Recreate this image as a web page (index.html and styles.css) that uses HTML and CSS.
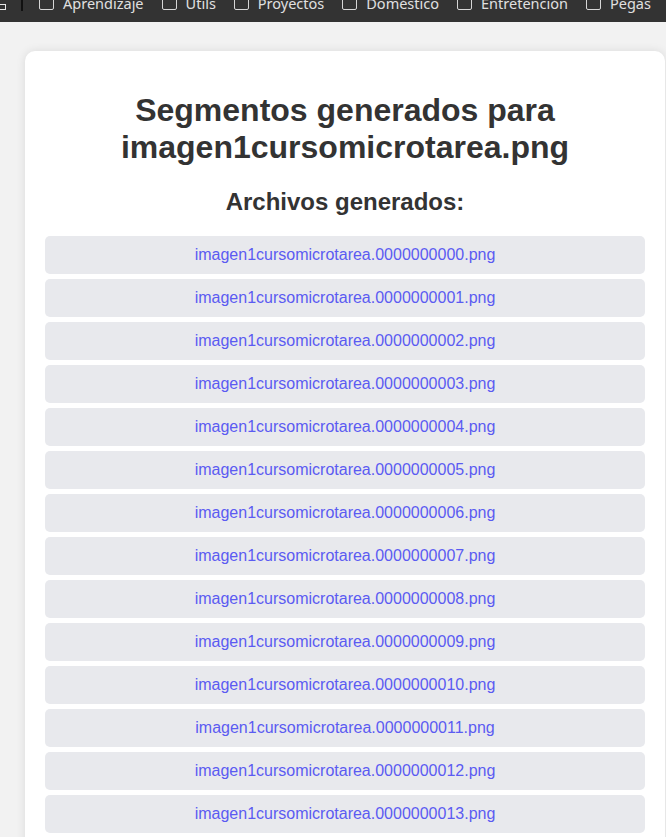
FILE: index.html
```html
<!DOCTYPE html>
<html lang="es">
<head>
<meta charset="utf-8">
<title>Segmentos generados</title>
<link rel="stylesheet" href="styles.css">
</head>
<body>
<div class="bookmarks">
  <div class="bm-row">
    <span class="bm-apps"></span>
    <span class="bm-sep"></span>
    <span class="bm-item"><span class="bm-box"></span>Aprendizaje</span>
    <span class="bm-item"><span class="bm-box"></span>Utils</span>
    <span class="bm-item"><span class="bm-box"></span>Proyectos</span>
    <span class="bm-item"><span class="bm-box"></span>Doméstico</span>
    <span class="bm-item"><span class="bm-box"></span>Entretención</span>
    <span class="bm-item"><span class="bm-box"></span>Pegas</span>
  </div>
</div>
<main class="card">
  <h1>Segmentos generados para imagen1cursomicrotarea.png</h1>
  <h2>Archivos generados:</h2>
  <ul class="files">
    <li><a href="#">imagen1cursomicrotarea.0000000000.png</a></li>
    <li><a href="#">imagen1cursomicrotarea.0000000001.png</a></li>
    <li><a href="#">imagen1cursomicrotarea.0000000002.png</a></li>
    <li><a href="#">imagen1cursomicrotarea.0000000003.png</a></li>
    <li><a href="#">imagen1cursomicrotarea.0000000004.png</a></li>
    <li><a href="#">imagen1cursomicrotarea.0000000005.png</a></li>
    <li><a href="#">imagen1cursomicrotarea.0000000006.png</a></li>
    <li><a href="#">imagen1cursomicrotarea.0000000007.png</a></li>
    <li><a href="#">imagen1cursomicrotarea.0000000008.png</a></li>
    <li><a href="#">imagen1cursomicrotarea.0000000009.png</a></li>
    <li><a href="#">imagen1cursomicrotarea.0000000010.png</a></li>
    <li><a href="#">imagen1cursomicrotarea.0000000011.png</a></li>
    <li><a href="#">imagen1cursomicrotarea.0000000012.png</a></li>
    <li><a href="#">imagen1cursomicrotarea.0000000013.png</a></li>
    <li><a href="#">imagen1cursomicrotarea.0000000014.png</a></li>
  </ul>
</main>
</body>
</html>
```

FILE: styles.css
```css
html, body {
  margin: 0;
  padding: 0;
}
body {
  background: #f2f2f2;
  font-family: "Liberation Sans", Arial, sans-serif;
  color: #333;
  overflow: hidden;
}

.bookmarks {
  height: 22px;
  background: #333333;
  overflow: hidden;
}
.bm-row {
  display: flex;
  align-items: center;
  height: 20px;
  margin-top: -7px;
  font-family: "Noto Sans", "Open Sans", sans-serif;
  font-size: 14.5px;
  line-height: 20px;
  color: #e0e0e0;
  white-space: nowrap;
}
.bm-apps {
  width: 6px;
  height: 6px;
  margin-top: 8px;
  border: 1.5px solid #e8e8e8;
  border-left: none;
  box-sizing: border-box;
  flex: none;
}
.bm-sep {
  width: 2px;
  height: 20px;
  margin-left: 15px;
  margin-top: -4px;
  background: #111;
  flex: none;
}
.bm-item {
  display: flex;
  align-items: center;
  margin-left: 18px;
}
.bm-sep + .bm-item {
  margin-left: 16px;
}
.bm-box {
  width: 15px;
  height: 14px;
  box-sizing: border-box;
  border: 1.5px solid #d6d6d6;
  border-radius: 2px;
  margin-right: 9px;
  flex: none;
}

.card {
  margin: 29px 1px 0 25px;
  padding: 20px;
  background: #fff;
  border-radius: 10px;
  box-shadow: 0 0 10px rgba(0, 0, 0, 0.1);
}
.card h1 {
  margin: 21px 0 22px;
  font-size: 32px;
  line-height: 37px;
  font-weight: bold;
  text-align: center;
  color: #333;
}
.card h2 {
  margin: 0 0 20px;
  font-size: 24px;
  line-height: 28px;
  font-weight: bold;
  text-align: center;
  color: #333;
}
.files {
  list-style: none;
  margin: 0;
  padding: 0;
  display: flex;
  flex-direction: column;
  gap: 5px;
}
.files li {
  background: #e8e9ed;
  border-radius: 5px;
  padding: 10px;
  text-align: center;
  font-size: 16px;
  line-height: 18px;
}
.files a {
  color: #5b5bf2;
  text-decoration: none;
}
```
